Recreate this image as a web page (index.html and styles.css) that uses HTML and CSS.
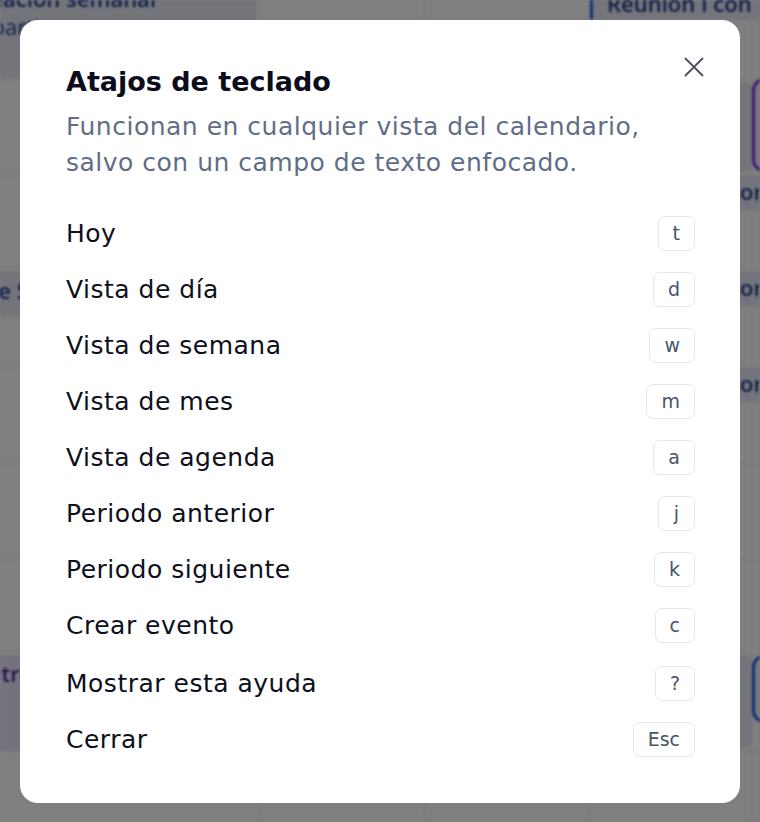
FILE: index.html
```html
<!DOCTYPE html>
<html lang="es">
<head>
<meta charset="utf-8">
<title>Atajos de teclado</title>
<link rel="stylesheet" href="styles.css">
</head>
<body>
<div class="calendar">
  <div class="col col-a">
    <div class="ev ev-blue ev-top-left"><b>Planeación semanal</b><span>Compartir avances</span></div>
    <div class="ev ev-blue ev-left-mid"><b>Revisión de S</b></div>
    <div class="ev ev-purple ev-left-bottom"><b>Control trimestral</b><span>Sala principal</span></div>
  </div>
  <div class="col col-b"></div>
  <div class="col col-c"></div>
  <div class="col col-d">
    <div class="ev ev-border-blue ev-top-right"><b>Reunión I con cliente</b></div>
    <div class="ev ev-lav ev-right-a"></div>
    <div class="ev ev-blue ev-or"><b>organización</b></div>
    <div class="ev ev-blue ev-or ev-or2"><b>organización</b></div>
    <div class="ev ev-blue ev-or ev-or3"><b>organización</b></div>
    <div class="ev ev-lav ev-right-b"></div>
  </div>
  <div class="col col-e">
    <div class="ev ev-border-purple ev-right-p"></div>
    <div class="ev ev-ring-blue ev-right-q"></div>
  </div>
</div>
<div class="overlay"></div>
<div class="modal" role="dialog" aria-labelledby="t">
  <button class="close" aria-label="Cerrar">
    <svg viewBox="0 0 20 20" width="20" height="20"><path d="M1.5 1.5L18.5 18.5M18.5 1.5L1.5 18.5" stroke="currentColor" stroke-width="1.8" stroke-linecap="round" fill="none"/></svg>
  </button>
  <h2 id="t" class="title">Atajos de teclado</h2>
  <p class="sub">Funcionan en cualquier vista del calendario, salvo con un campo de texto enfocado.</p>
  <ul class="list">
    <li class="row"><span>Hoy</span><kbd class="key">t</kbd></li>
    <li class="row"><span>Vista de día</span><kbd class="key">d</kbd></li>
    <li class="row"><span>Vista de semana</span><kbd class="key">w</kbd></li>
    <li class="row"><span>Vista de mes</span><kbd class="key">m</kbd></li>
    <li class="row"><span>Vista de agenda</span><kbd class="key">a</kbd></li>
    <li class="row"><span>Periodo anterior</span><kbd class="key">j</kbd></li>
    <li class="row"><span>Periodo siguiente</span><kbd class="key">k</kbd></li>
    <li class="row"><span>Crear evento</span><kbd class="key">c</kbd></li>
    <li class="row row-tall"><span>Mostrar esta ayuda</span><kbd class="key">?</kbd></li>
    <li class="row"><span>Cerrar</span><kbd class="key">Esc</kbd></li>
  </ul>
</div>
</body>
</html>
```
FILE: styles.css
```css
* { box-sizing: border-box; }
html, body { margin: 0; padding: 0; }
body {
  width: 760px;
  height: 822px;
  overflow: hidden;
  position: relative;
  font-family: "DejaVu Sans", "Open Sans", sans-serif;
  background: #ffffff;
}

/* background calendar */
.calendar {
  display: grid;
  grid-template-columns: 260px 165px 165px 162px 1fr;
  height: 822px;
  overflow: hidden;
  filter: blur(0.8px);
  background: #fff;
}
.col {
  position: relative;
  border-right: 1px solid #ececec;
  background-image: linear-gradient(to bottom, #ececec 1px, transparent 1px);
  background-size: 100% 96px;
  background-position: 0 79px;
}
.ev {
  position: absolute;
  border-radius: 8px;
  padding: 0 8px;
  display: flex;
  flex-direction: column;
  font-family: "Open Sans", sans-serif;
  font-size: 22px;
  line-height: 28px;
  white-space: nowrap;
  overflow: hidden;
  color: #1e3a8a;
}
.ev b { font-weight: 600; }
.ev span { font-weight: 400; }
.ev-blue { background: #e6ebf7; }
.ev-purple { background: #ede5fb; color: #4c1d95; }
.ev-lav { background: #ece8f6; }
.ev-border-blue { background: #e6ebf7; border-left: 3px solid #2563eb; border-radius: 3px; }
.ev-border-purple { background: #f3edff; border: 3px solid #7c3aed; border-radius: 12px; }
.ev-ring-blue { background: #eef2fb; border: 3px solid #2563eb; border-radius: 12px; }

.ev-top-left { left: -64px; right: 2px; top: -16px; height: 94px; }
.ev-left-mid { left: -118px; right: 2px; top: 271px; height: 46px; padding-top: 5px; }
.ev-left-bottom { left: -160px; right: 2px; top: 655px; height: 96px; padding-top: 4px; }

.ev-top-right { left: 0; right: -60px; top: -10px; height: 30px; padding-left: 14px; line-height: 26px; }
.ev-right-a { left: 4px; right: -2px; top: 82px; height: 90px; }
.ev-or { left: 4px; right: -40px; top: 176px; height: 34px; padding-left: 146px; padding-top: 1px; }
.ev-or2 { top: 272px; }
.ev-or3 { top: 368px; }
.ev-right-b { left: 4px; right: -2px; top: 656px; height: 92px; }
.ev-right-p { left: 0; right: -20px; top: 78px; height: 94px; }
.ev-right-q { left: 0; right: -20px; top: 655px; height: 68px; }

.overlay {
  position: absolute;
  inset: 0;
  background: rgba(0, 0, 0, 0.5);
}

/* modal */
.modal {
  position: absolute;
  left: 20px;
  top: 20px;
  width: 720px;
  height: 783px;
  background: #ffffff;
  border-radius: 18px;
  padding: 42px 45px 0 46px;
  color: #0d0f1c;
}
.close {
  position: absolute;
  top: 36px;
  right: 35px;
  width: 22px;
  height: 22px;
  padding: 1px;
  border: 0;
  background: none;
  color: #4b5060;
  display: flex;
}
.title {
  margin: 0;
  font-size: 27px;
  line-height: 40px;
  font-weight: 700;
  color: #0b0d1a;
}
.sub {
  margin: 7px 0 0;
  width: 620px;
  font-size: 25px;
  line-height: 36px;
  letter-spacing: 0.5px;
  color: #5f6e86;
}
.list {
  list-style: none;
  margin: 24px 0 0;
  padding: 0;
  display: flex;
  flex-direction: column;
}
.row {
  height: 56px;
  display: flex;
  align-items: center;
  justify-content: space-between;
  font-size: 25px;
  letter-spacing: 0.5px;
  color: #0d0f1c;
}
.row-tall { height: 58px; padding-top: 2px; }
.key {
  min-width: 37px;
  height: 35px;
  padding: 0 14px;
  display: inline-flex;
  align-items: center;
  justify-content: center;
  border: 1.5px solid #e3e7ee;
  border-radius: 7px;
  font-family: "DejaVu Sans", sans-serif;
  font-size: 19px;
  font-weight: 400;
  letter-spacing: 0;
  color: #475569;
  background: #fff;
}
```
